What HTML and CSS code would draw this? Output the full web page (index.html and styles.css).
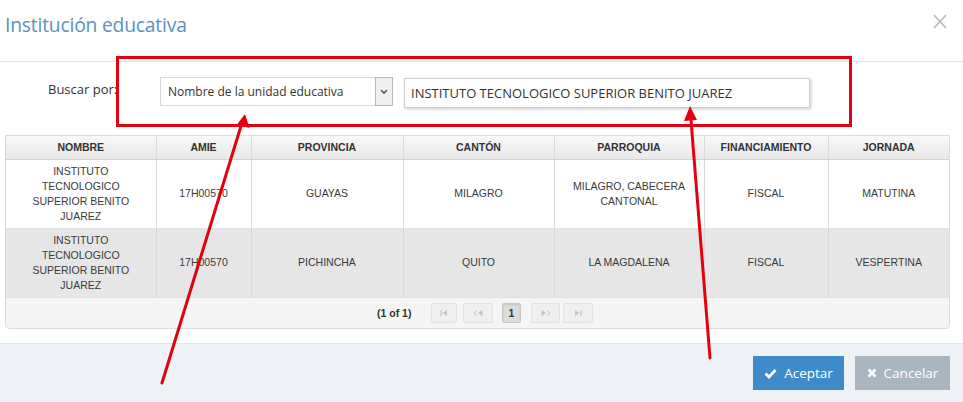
FILE: index.html
```html
<!DOCTYPE html>
<html lang="es">
<head>
<meta charset="utf-8">
<link rel="stylesheet" href="styles.css">
</head>
<body>
<div class="dialog">
  <div class="dlg-header">
    <span class="dlg-title">Institución educativa</span>
    <svg class="dlg-close" width="14" height="15" viewBox="0 0 14 15"><path d="M1 1 L13 14 M13 1 L1 14" stroke="#b8b8b8" stroke-width="1.6" fill="none"/></svg>
  </div>
  <div class="dlg-body">
    <div class="search-row">
      <label class="search-label">Buscar por:</label>
      <div class="select">
        <span class="select-text">Nombre de la unidad educativa</span>
        <span class="select-btn"><svg width="8" height="6" viewBox="0 0 8 6"><path d="M1 1 L4 4 L7 1" stroke="#555" stroke-width="1.6" fill="none"/></svg></span>
      </div>
      <div class="text-input">INSTITUTO TECNOLOGICO SUPERIOR BENITO JUAREZ</div>
    </div>
    <div class="grid">
      <table>
        <colgroup>
          <col class="c1"><col class="c2"><col class="c3"><col class="c4"><col class="c5"><col class="c6"><col class="c7">
        </colgroup>
        <thead>
          <tr><th>NOMBRE</th><th>AMIE</th><th>PROVINCIA</th><th>CANTÓN</th><th>PARROQUIA</th><th>FINANCIAMIENTO</th><th>JORNADA</th></tr>
        </thead>
        <tbody>
          <tr class="r-odd"><td>INSTITUTO<br>TECNOLOGICO<br>SUPERIOR BENITO<br>JUAREZ</td><td>17H00570</td><td>GUAYAS</td><td>MILAGRO</td><td>MILAGRO, CABECERA<br>CANTONAL</td><td>FISCAL</td><td>MATUTINA</td></tr>
          <tr class="r-even"><td>INSTITUTO<br>TECNOLOGICO<br>SUPERIOR BENITO<br>JUAREZ</td><td>17H00570</td><td>PICHINCHA</td><td>QUITO</td><td>LA MAGDALENA</td><td>FISCAL</td><td>VESPERTINA</td></tr>
        </tbody>
      </table>
      <div class="paginator">
        <span class="pg-count">(1 of 1)</span>
        <span class="pg-btn pg-first"><svg width="8" height="6" viewBox="0 0 8 6"><path d="M1 0 V6" stroke="#c4c4c4" stroke-width="1.2"/><path d="M7 0 L2.5 3 L7 6 Z" fill="#c4c4c4"/></svg></span>
        <span class="pg-btn pg-prev"><svg width="10" height="6" viewBox="0 0 10 6"><path d="M4 0.5 L1 3 L4 5.5" stroke="#c4c4c4" stroke-width="1" fill="none"/><path d="M9.5 0 L5 3 L9.5 6 Z" fill="#c4c4c4"/></svg></span>
        <span class="pg-btn pg-page">1</span>
        <span class="pg-btn pg-next"><svg width="10" height="6" viewBox="0 0 10 6"><path d="M0.5 0 L5 3 L0.5 6 Z" fill="#c4c4c4"/><path d="M6 0.5 L9 3 L6 5.5" stroke="#c4c4c4" stroke-width="1" fill="none"/></svg></span>
        <span class="pg-btn pg-last"><svg width="8" height="6" viewBox="0 0 8 6"><path d="M1 0 L5.5 3 L1 6 Z" fill="#c4c4c4"/><path d="M7 0 V6" stroke="#c4c4c4" stroke-width="1.2"/></svg></span>
      </div>
    </div>
  </div>
  <div class="dlg-footer">
    <button class="btn btn-ok"><svg width="13" height="11" viewBox="0 0 13 11"><path d="M1.5 5.5 L5 9 L11.5 2" stroke="#fff" stroke-width="2.8" fill="none"/></svg>Aceptar</button>
    <button class="btn btn-cancel"><svg width="10" height="10" viewBox="0 0 10 10"><path d="M1.5 1.5 L8.5 8.5 M8.5 1.5 L1.5 8.5" stroke="#fff" stroke-width="2.6" fill="none"/></svg>Cancelar</button>
  </div>

  <div class="mark-box"></div>
  <svg class="arrows" width="963" height="402" viewBox="0 0 963 402">
    <line x1="162" y1="383" x2="241" y2="126" stroke="#e4000f" stroke-width="3" stroke-linecap="round"/>
    <path d="M245 114 L249.5 128 L237 124.5 Z" fill="#e4000f"/>
    <line x1="710" y1="358" x2="691" y2="120" stroke="#e4000f" stroke-width="3" stroke-linecap="round"/>
    <path d="M690 106 L697 120 L684 121 Z" fill="#e4000f"/>
  </svg>
</div>
</body>
</html>
```
FILE: styles.css
```css
* { box-sizing: border-box; }
html, body { margin: 0; padding: 0; background: #fff; }
body { width: 963px; height: 402px; overflow: hidden; }

.dialog {
  position: relative;
  width: 963px;
  height: 402px;
  display: flex;
  flex-direction: column;
  font-family: "Open Sans", "Liberation Sans", sans-serif;
}

.dlg-header {
  height: 62px;
  border-bottom: 1px solid #e5e5e5;
  display: flex;
  align-items: flex-start;
  justify-content: space-between;
  padding: 11px 16px 0 5px;
}
.dlg-title {
  font-size: 19.3px;
  color: #5b8fc6;
  line-height: 28px;
  letter-spacing: -0.2px;
}
.dlg-close { margin-top: 3px; }

.dlg-body {
  flex: 1;
  padding: 15px 14px 0 5px;
}

.search-row {
  display: flex;
  align-items: flex-start;
  height: 58px;
}
.search-label {
  font-size: 13px;
  color: #333;
  margin: 2px 0 0 43px;
  width: 112px;
  line-height: 20px;
}
.select {
  width: 233px;
  height: 29px;
  border: 1px solid #d6d6d6;
  display: flex;
  align-items: center;
  justify-content: space-between;
  background: #fff;
}
.select-text {
  font-size: 12px;
  color: #333;
  padding-left: 7px;
}
.select-btn {
  width: 18px;
  height: 29px;
  margin: -1px -1px -1px 0;
  border: 1px solid #b9b9b9;
  background: #efefef;
  display: flex;
  align-items: center;
  justify-content: center;
}
.text-input {
  width: 406px;
  height: 30px;
  margin: 1px 0 0 11px;
  border: 1px solid #cfcfcf;
  box-shadow: 1px 1px 3px rgba(0,0,0,0.22);
  font-size: 13px;
  color: #333;
  padding: 5px 0 0 6px;
  line-height: 18px;
  background: #fff;
}

.grid {
  width: 945px;
  border: 1px solid #dcdcdc;
  border-radius: 0 0 4px 4px;
  font-family: "Liberation Sans", Arial, sans-serif;
}
table {
  width: 100%;
  border-collapse: collapse;
  table-layout: fixed;
}
col.c1 { width: 150px; }
col.c2 { width: 95px; }
col.c3 { width: 152px; }
col.c4 { width: 151px; }
col.c5 { width: 150px; }
col.c6 { width: 124px; }
col.c7 { width: 121px; }

th {
  height: 23px;
  padding: 0;
  font-size: 10.5px;
  font-weight: bold;
  color: #333;
  background: linear-gradient(#f8f8f8, #e8e8e8);
  border-left: 1px solid #dcdcdc;
  border-bottom: 1px solid #d2d2d2;
  text-align: center;
}
th:first-child, td:first-child { border-left: none; }
td {
  height: 69px;
  padding: 0 4px;
  font-size: 10.5px;
  line-height: 15px;
  color: #3a3a3a;
  text-align: center;
  border-left: 1px solid #dcdcdc;
  border-bottom: 1px solid #e0e0e0;
}
tr.r-odd td { background: #fff; }
tr.r-even td { background: #e6e6e6; border-left-color: #dadada; }

.paginator {
  height: 30px;
  background: #f5f5f5;
  border-radius: 0 0 4px 4px;
  display: flex;
  align-items: center;
  padding-left: 371px;
  font-size: 10.5px;
}
.pg-count {
  font-weight: bold;
  color: #333;
  width: 54px;
}
.pg-btn {
  height: 20px;
  border: 1px solid #e3e3e3;
  border-radius: 2px;
  background: #efefef;
  display: flex;
  align-items: center;
  justify-content: center;
}
.pg-first { width: 26px; }
.pg-prev { width: 30px; margin-left: 6px; }
.pg-page {
  width: 19px;
  margin-left: 9px;
  background: #dcdcdc;
  border-color: #c8c8c8;
  font-weight: bold;
  color: #333;
  box-shadow: inset 0 1px 2px rgba(0,0,0,0.12);
}
.pg-next { width: 29px; margin-left: 10px; }
.pg-last { width: 30px; margin-left: 3px; }

.dlg-footer {
  height: 59px;
  background: #eef1f5;
  border-top: 1px solid #e2e5ea;
  display: flex;
  justify-content: flex-end;
  align-items: flex-start;
  padding: 12px 13px 0 0;
  gap: 11px;
}
.btn {
  height: 34px;
  border: none;
  color: #fff;
  font-family: "Open Sans", "Liberation Sans", sans-serif;
  font-size: 13.5px;
  display: flex;
  align-items: center;
  justify-content: center;
  gap: 7px;
  padding: 0;
}
.btn-ok { width: 91px; background: #3f8acb; }
.btn-cancel { width: 95px; background: #a9b6c0; }

.mark-box {
  position: absolute;
  left: 116px;
  top: 56px;
  width: 736px;
  height: 71px;
  border: 3px solid #e4000f;
}
.arrows {
  position: absolute;
  left: 0;
  top: 0;
  pointer-events: none;
}
```
